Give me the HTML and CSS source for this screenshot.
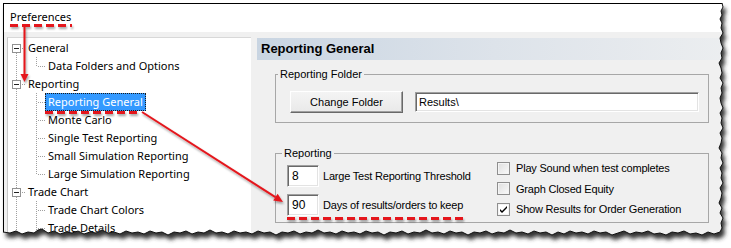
FILE: index.html
```html
<!DOCTYPE html>
<html>
<head>
<meta charset="utf-8">
<link rel="stylesheet" href="styles.css">
</head>
<body>
<div class="frame">
  <div class="title">Preferences</div>
  <div class="main">
    <div class="tree">
      <div class="row"><span class="c box first"><span class="exp"></span></span><span class="lbl">General</span></div>
      <div class="row"><span class="c pipe"></span><span class="c corner"></span><span class="lbl">Data Folders and Options</span></div>
      <div class="row"><span class="c box"><span class="exp"></span></span><span class="lbl">Reporting</span></div>
      <div class="row"><span class="c pipe"></span><span class="c tee"></span><span class="lbl sel">Reporting General</span></div>
      <div class="row"><span class="c pipe"></span><span class="c tee"></span><span class="lbl">Monte Carlo</span></div>
      <div class="row"><span class="c pipe"></span><span class="c tee"></span><span class="lbl">Single Test Reporting</span></div>
      <div class="row"><span class="c pipe"></span><span class="c tee"></span><span class="lbl">Small Simulation Reporting</span></div>
      <div class="row"><span class="c pipe"></span><span class="c corner"></span><span class="lbl">Large Simulation Reporting</span></div>
      <div class="row"><span class="c box"><span class="exp"></span></span><span class="lbl">Trade Chart</span></div>
      <div class="row"><span class="c pipe"></span><span class="c tee"></span><span class="lbl">Trade Chart Colors</span></div>
      <div class="row"><span class="c pipe"></span><span class="c tee"></span><span class="lbl">Trade Details</span></div>
      <div class="row tail"><span class="c pipe"></span><span class="c pipe"></span></div>
    </div>
    <div class="pane">
      <div class="header">Reporting General</div>
      <fieldset class="group g1">
        <legend>Reporting Folder</legend>
        <div class="folder-row">
          <div class="btn">Change Folder</div>
          <div class="textbox path">Results\</div>
        </div>
      </fieldset>
      <fieldset class="group g2">
        <legend>Reporting</legend>
        <div class="rep-cols">
          <div class="fields">
            <div class="field"><div class="textbox num">8</div><span class="txt">Large Test Reporting Threshold</span></div>
            <div class="field"><div class="textbox num">90</div><span class="txt">Days of results/orders to keep</span></div>
          </div>
          <div class="checks">
            <div class="check"><span class="cb"></span><span class="txt">Play Sound when test completes</span></div>
            <div class="check"><span class="cb"></span><span class="txt">Graph Closed Equity</span></div>
            <div class="check"><span class="cb on"><svg width="11" height="11" viewBox="0 0 11 11"><path d="M2 5 L4 7 L9 2 L9 4 L4 9 L2 7 Z" fill="#000"/></svg></span><span class="txt">Show Results for Order Generation</span></div>
          </div>
        </div>
      </fieldset>
    </div>
  </div>
</div>

<svg class="overlay" width="731" height="248" viewBox="0 0 731 248">
  <defs>
    <clipPath id="outside">
      <path clip-rule="evenodd" d="M0,0 H731 V248 H0 Z M3,3 L722,3 L723,7 L721,11 L722,15 L720,19 L722,23 L721,28 L723,33 L720,38 L721,43 L723,48 L721,53 L722,58 L719,63 L721,68 L722,73 L720,78 L723,83 L721,88 L722,93 L720,98 L721,103 L723,108 L720,113 L722,118 L721,123 L723,128 L720,133 L722,138 L721,143 L719,148 L722,153 L721,158 L723,163 L720,168 L722,173 L721,178 L723,183 L720,188 L722,193 L721,198 L719,203 L722,208 L720,213 L723,218 L721,223 L722,228 L720,232 L714,234 L708,232 L702,235 L696,233 L690,234 L684,231 L678,233 L672,232 L666,235 L660,233 L654,234 L648,231 L642,233 L636,232 L630,234 L624,231 L618,233 L612,235 L606,232 L600,233 L594,231 L588,234 L582,232 L576,233 L570,231 L564,234 L558,232 L552,235 L546,232 L540,233 L534,231 L528,234 L522,232 L516,233 L510,230 L504,233 L498,232 L492,234 L486,231 L480,233 L474,232 L468,235 L462,232 L456,233 L450,231 L444,234 L438,232 L432,233 L426,230 L420,233 L414,232 L408,234 L402,231 L396,233 L390,232 L384,235 L378,232 L372,233 L366,231 L360,234 L354,232 L348,233 L342,231 L336,234 L330,232 L324,233 L318,230 L312,233 L306,232 L300,234 L294,231 L288,233 L282,232 L276,235 L270,232 L264,233 L258,231 L252,234 L246,232 L240,233 L234,231 L228,234 L222,232 L216,233 L210,230 L204,233 L198,232 L192,234 L186,231 L180,233 L174,232 L168,235 L162,232 L156,233 L150,231 L144,234 L138,232 L132,233 L126,231 L120,234 L114,232 L108,233 L102,230 L96,233 L90,232 L84,234 L78,231 L72,233 L66,232 L60,234 L54,231 L48,233 L42,229 L38,230 L34,233 L28,232 L22,234 L16,231 L10,233 L3,232 Z"/>
    </clipPath>
    <filter id="blur" x="-10%" y="-10%" width="120%" height="130%"><feGaussianBlur stdDeviation="2"/></filter>
    <filter id="ds" x="-20%" y="-20%" width="140%" height="160%"><feDropShadow dx="1" dy="2" stdDeviation="1" flood-color="#000" flood-opacity="0.35"/></filter>
  </defs>
  <path fill="#fff" fill-rule="evenodd" d="M0,0 H731 V248 H0 Z M3,3 L722,3 L723,7 L721,11 L722,15 L720,19 L722,23 L721,28 L723,33 L720,38 L721,43 L723,48 L721,53 L722,58 L719,63 L721,68 L722,73 L720,78 L723,83 L721,88 L722,93 L720,98 L721,103 L723,108 L720,113 L722,118 L721,123 L723,128 L720,133 L722,138 L721,143 L719,148 L722,153 L721,158 L723,163 L720,168 L722,173 L721,178 L723,183 L720,188 L722,193 L721,198 L719,203 L722,208 L720,213 L723,218 L721,223 L722,228 L720,232 L714,234 L708,232 L702,235 L696,233 L690,234 L684,231 L678,233 L672,232 L666,235 L660,233 L654,234 L648,231 L642,233 L636,232 L630,234 L624,231 L618,233 L612,235 L606,232 L600,233 L594,231 L588,234 L582,232 L576,233 L570,231 L564,234 L558,232 L552,235 L546,232 L540,233 L534,231 L528,234 L522,232 L516,233 L510,230 L504,233 L498,232 L492,234 L486,231 L480,233 L474,232 L468,235 L462,232 L456,233 L450,231 L444,234 L438,232 L432,233 L426,230 L420,233 L414,232 L408,234 L402,231 L396,233 L390,232 L384,235 L378,232 L372,233 L366,231 L360,234 L354,232 L348,233 L342,231 L336,234 L330,232 L324,233 L318,230 L312,233 L306,232 L300,234 L294,231 L288,233 L282,232 L276,235 L270,232 L264,233 L258,231 L252,234 L246,232 L240,233 L234,231 L228,234 L222,232 L216,233 L210,230 L204,233 L198,232 L192,234 L186,231 L180,233 L174,232 L168,235 L162,232 L156,233 L150,231 L144,234 L138,232 L132,233 L126,231 L120,234 L114,232 L108,233 L102,230 L96,233 L90,232 L84,234 L78,231 L72,233 L66,232 L60,234 L54,231 L48,233 L42,229 L38,230 L34,233 L28,232 L22,234 L16,231 L10,233 L3,232 Z"/>
  <g clip-path="url(#outside)">
    <path fill="#333" filter="url(#blur)" transform="translate(3,5)" d="M3,3 L722,3 L723,7 L721,11 L722,15 L720,19 L722,23 L721,28 L723,33 L720,38 L721,43 L723,48 L721,53 L722,58 L719,63 L721,68 L722,73 L720,78 L723,83 L721,88 L722,93 L720,98 L721,103 L723,108 L720,113 L722,118 L721,123 L723,128 L720,133 L722,138 L721,143 L719,148 L722,153 L721,158 L723,163 L720,168 L722,173 L721,178 L723,183 L720,188 L722,193 L721,198 L719,203 L722,208 L720,213 L723,218 L721,223 L722,228 L720,232 L714,234 L708,232 L702,235 L696,233 L690,234 L684,231 L678,233 L672,232 L666,235 L660,233 L654,234 L648,231 L642,233 L636,232 L630,234 L624,231 L618,233 L612,235 L606,232 L600,233 L594,231 L588,234 L582,232 L576,233 L570,231 L564,234 L558,232 L552,235 L546,232 L540,233 L534,231 L528,234 L522,232 L516,233 L510,230 L504,233 L498,232 L492,234 L486,231 L480,233 L474,232 L468,235 L462,232 L456,233 L450,231 L444,234 L438,232 L432,233 L426,230 L420,233 L414,232 L408,234 L402,231 L396,233 L390,232 L384,235 L378,232 L372,233 L366,231 L360,234 L354,232 L348,233 L342,231 L336,234 L330,232 L324,233 L318,230 L312,233 L306,232 L300,234 L294,231 L288,233 L282,232 L276,235 L270,232 L264,233 L258,231 L252,234 L246,232 L240,233 L234,231 L228,234 L222,232 L216,233 L210,230 L204,233 L198,232 L192,234 L186,231 L180,233 L174,232 L168,235 L162,232 L156,233 L150,231 L144,234 L138,232 L132,233 L126,231 L120,234 L114,232 L108,233 L102,230 L96,233 L90,232 L84,234 L78,231 L72,233 L66,232 L60,234 L54,231 L48,233 L42,229 L38,230 L34,233 L28,232 L22,234 L16,231 L10,233 L3,232 Z"/>
  </g>
  <path fill="none" stroke="#111" stroke-width="1" d="M722,3 L723,7 L721,11 L722,15 L720,19 L722,23 L721,28 L723,33 L720,38 L721,43 L723,48 L721,53 L722,58 L719,63 L721,68 L722,73 L720,78 L723,83 L721,88 L722,93 L720,98 L721,103 L723,108 L720,113 L722,118 L721,123 L723,128 L720,133 L722,138 L721,143 L719,148 L722,153 L721,158 L723,163 L720,168 L722,173 L721,178 L723,183 L720,188 L722,193 L721,198 L719,203 L722,208 L720,213 L723,218 L721,223 L722,228 L720,232 L714,234 L708,232 L702,235 L696,233 L690,234 L684,231 L678,233 L672,232 L666,235 L660,233 L654,234 L648,231 L642,233 L636,232 L630,234 L624,231 L618,233 L612,235 L606,232 L600,233 L594,231 L588,234 L582,232 L576,233 L570,231 L564,234 L558,232 L552,235 L546,232 L540,233 L534,231 L528,234 L522,232 L516,233 L510,230 L504,233 L498,232 L492,234 L486,231 L480,233 L474,232 L468,235 L462,232 L456,233 L450,231 L444,234 L438,232 L432,233 L426,230 L420,233 L414,232 L408,234 L402,231 L396,233 L390,232 L384,235 L378,232 L372,233 L366,231 L360,234 L354,232 L348,233 L342,231 L336,234 L330,232 L324,233 L318,230 L312,233 L306,232 L300,234 L294,231 L288,233 L282,232 L276,235 L270,232 L264,233 L258,231 L252,234 L246,232 L240,233 L234,231 L228,234 L222,232 L216,233 L210,230 L204,233 L198,232 L192,234 L186,231 L180,233 L174,232 L168,235 L162,232 L156,233 L150,231 L144,234 L138,232 L132,233 L126,231 L120,234 L114,232 L108,233 L102,230 L96,233 L90,232 L84,234 L78,231 L72,233 L66,232 L60,234 L54,231 L48,233 L42,229 L38,230 L34,233 L28,232 L22,234 L16,231 L10,233 L3,232"/>

  <g filter="url(#ds)" stroke="#e4161c" fill="#e4161c">
    <line x1="10" y1="25.5" x2="72" y2="25.5" stroke-width="3" stroke-dasharray="8 4"/>
    <line x1="24.5" y1="27" x2="24.5" y2="75" stroke-width="2"/>
    <polygon points="20.5,74 28.5,74 24.5,82" stroke="none"/>
    <line x1="45" y1="112.5" x2="141" y2="112.5" stroke-width="3" stroke-dasharray="8 4"/>
    <line x1="142" y1="112" x2="275.4" y2="197.2" stroke-width="2"/>
    <polygon points="283,202 273.2,200.6 277.6,193.8" stroke="none"/>
    <line x1="287" y1="218.5" x2="463" y2="218.5" stroke-width="3" stroke-dasharray="8 4"/>
  </g>
</svg>
</body>
</html>
```

FILE: styles.css
```css
* { box-sizing: border-box; }

html, body {
  margin: 0;
  padding: 0;
  background: #fff;
  width: 731px;
  height: 248px;
  overflow: hidden;
}

body {
  position: relative;
  font-family: "Liberation Sans", Arial, sans-serif;
  font-size: 11px;
  color: #000;
}

.frame {
  margin: 3px 0 0 3px;
  width: 728px;
  height: 245px;
  border-top: 1px solid #000;
  border-left: 1px solid #000;
  background: #fff;
  overflow: hidden;
  display: flex;
  flex-direction: column;
}

.title {
  height: 28px;
  line-height: 26px;
  padding-left: 6px;
  font-family: "Noto Sans", sans-serif;
  font-size: 11px;
  flex: none;
}

.main {
  flex: 1;
  background: #f0f0f0;
  display: flex;
  padding-top: 5px;
}

/* ---------- tree ---------- */
.tree {
  margin-left: 3px;
  width: 244px;
  background: #fff;
  border-top: 1px solid #d8d8d8;
  border-left: 1px solid #c8c8c8;
  padding-top: 1px;
  font-family: "Noto Sans", sans-serif;
  font-size: 11px;
  flex: none;
}

.row {
  display: flex;
  height: 18px;
  white-space: nowrap;
}

.c {
  --v: repeating-linear-gradient(to bottom, #a0a0a0 0 1px, transparent 1px 2px);
  --h: repeating-linear-gradient(to right, #a0a0a0 0 1px, transparent 1px 2px);
  width: 20px;
  flex: none;
}

.pipe { background: var(--v) 8px 0 / 1px 18px no-repeat; }
.tee { background: var(--v) 8px 0 / 1px 18px no-repeat, var(--h) 10px 9px / 8px 1px no-repeat; }
.corner { background: var(--v) 8px 0 / 1px 10px no-repeat, var(--h) 10px 9px / 8px 1px no-repeat; }
.box { background: var(--v) 8px 0 / 1px 18px no-repeat, var(--h) 14px 9px / 4px 1px no-repeat; }
.box.first { background: var(--v) 8px 10px / 1px 8px no-repeat, var(--h) 14px 9px / 4px 1px no-repeat; }

.exp {
  display: block;
  width: 9px;
  height: 9px;
  margin: 5px 0 0 4px;
  border: 1px solid #919191;
  background: linear-gradient(#222, #222) center / 5px 1px no-repeat, #fff;
}

.lbl {
  line-height: 16px;
  height: 18px;
  border: 1px solid transparent;
  padding: 0 2px;
  margin-left: -3px;
}

.lbl.sel {
  background: #3399ff;
  color: #fff;
  border: 1px dotted #1a1a1a;
}

/* ---------- right pane ---------- */
.pane {
  flex: 1;
  margin-left: 6px;
  display: flex;
  flex-direction: column;
}

.header {
  margin-top: 1px;
  height: 22px;
  line-height: 22px;
  padding-left: 4px;
  font-weight: bold;
  font-size: 13px;
  background: linear-gradient(to right, #c9d5e2, #dde3ea 50%, #eceef0);
  flex: none;
}

.group {
  margin: 0 0 0 18px;
  padding: 0;
  width: 434px;
  border: 1px solid #a7a7a7;
  min-width: 0;
  flex: none;
}

.group legend {
  padding: 0 2px;
  line-height: 13px;
  font-size: 11px;
}

.g1 { margin-top: 8px; }
.g1 legend { margin-left: 2px; }

.folder-row {
  display: flex;
  align-items: center;
  padding: 10px 0 9px 14px;
}

.btn {
  width: 113px;
  height: 22px;
  line-height: 20px;
  text-align: center;
  background: linear-gradient(#f4f4f4, #e9e9e9);
  border: 1px solid;
  border-color: #fff #696969 #696969 #fff;
  box-shadow: inset -1px -1px 0 #a0a0a0;
}

.textbox {
  background: #fff;
  border: 1px solid;
  border-color: #a0a0a0 #fff #fff #a0a0a0;
  box-shadow: inset 1px 1px 0 #696969, inset -1px -1px 0 #e3e3e3;
}

.path {
  margin-left: 12px;
  width: 284px;
  height: 20px;
  line-height: 18px;
  padding-left: 3px;
}

.g2 { margin-top: 24px; }
.g2 legend { margin-left: 6px; }

.rep-cols {
  display: flex;
  padding: 5px 0 2px 11px;
}

.fields {
  width: 210px;
  display: flex;
  flex-direction: column;
  gap: 7px;
}

.field {
  display: flex;
  align-items: center;
}

.num {
  width: 32px;
  height: 22px;
  line-height: 20px;
  padding-left: 4px;
  font-size: 12px;
  margin-right: 4px;
}

.txt { letter-spacing: -0.2px; }

.checks {
  margin-top: -7px;
  display: flex;
  flex-direction: column;
}

.check {
  display: flex;
  align-items: center;
  height: 20.5px;
}

.cb {
  width: 13px;
  height: 13px;
  border: 1px solid #8f8f8f;
  background: linear-gradient(135deg, #dedede, #fbfbfb);
  box-shadow: inset 0 0 0 1px #f4f4f4;
  margin-right: 6px;
  display: flex;
  align-items: center;
  justify-content: center;
}

.cb.on { background: #fff; }

.overlay {
  position: absolute;
  left: 0;
  top: 0;
  pointer-events: none;
}
```
